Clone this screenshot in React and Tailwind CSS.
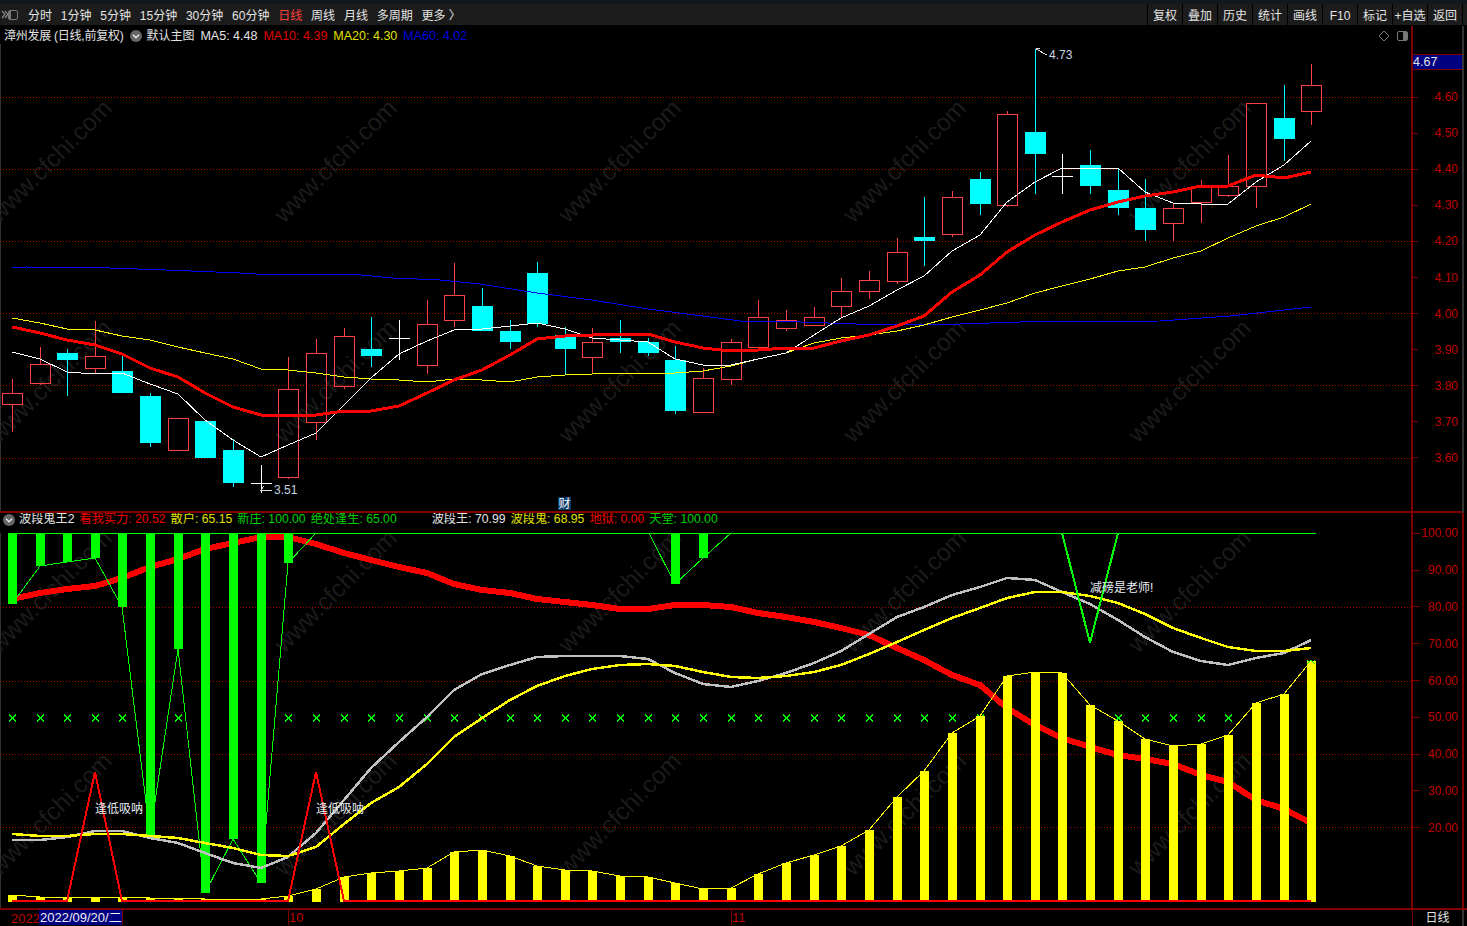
import React from "react";

const X = [12, 40, 67, 95, 122, 150, 178, 205, 233, 261, 288, 316, 344, 371, 399, 427, 454, 482, 510, 537, 565, 592, 620, 648, 675, 703, 731, 758, 786, 814, 841, 869, 897, 924, 952, 980, 1007, 1035, 1062, 1090, 1118, 1145, 1173, 1201, 1228, 1256, 1284, 1311];

// type, wick top, body top, body bottom, wick bottom
const candles = [
  ["r", 379, 393, 404, 432], ["r", 347, 364, 383, 385], ["c", 349, 353, 360, 396], ["r", 321, 356, 368, 374],
  ["c", 356, 371, 393, 393], ["c", 393, 396, 443, 447], ["r", 418, 418, 450, 450], ["c", 421, 421, 458, 458],
  ["c", 439, 450, 483, 487], ["w", 465, 483, 483, 493], ["r", 357, 389, 477, 479], ["r", 339, 353, 422, 440],
  ["r", 328, 336, 386, 389], ["c", 317, 349, 356, 367], ["w", 320, 338, 338, 360], ["r", 300, 324, 365, 374],
  ["r", 263, 295, 320, 327], ["c", 288, 306, 331, 331], ["c", 320, 331, 342, 349], ["c", 262, 273, 324, 327],
  ["c", 327, 335, 349, 374], ["r", 328, 342, 357, 374], ["c", 320, 338, 342, 353], ["c", 338, 342, 353, 356],
  ["c", 346, 360, 411, 414], ["r", 368, 378, 412, 412], ["r", 339, 342, 379, 385], ["r", 300, 317, 347, 350],
  ["r", 310, 320, 328, 331], ["r", 307, 317, 325, 325], ["r", 278, 291, 306, 317], ["r", 271, 280, 291, 299],
  ["r", 238, 252, 281, 284], ["c", 197, 237, 241, 266], ["r", 191, 197, 234, 237], ["c", 172, 179, 204, 215],
  ["r", 111, 114, 205, 207], ["c", 49, 132, 154, 194], ["w", 154, 176, 176, 194], ["c", 150, 165, 186, 194],
  ["c", 168, 190, 208, 215], ["c", 179, 208, 230, 241], ["r", 203, 208, 223, 241], ["r", 180, 186, 202, 223],
  ["r", 155, 186, 195, 197], ["r", 103, 103, 186, 208], ["c", 85, 118, 139, 161], ["r", 64, 85, 111, 125],
];

const ma5 = [352, 359, 372, 374, 373, 384, 394, 420, 440, 457, 445, 433, 405, 378, 354, 341, 330, 329, 326, 323, 329, 338, 340, 342, 359, 365, 365, 359, 353, 335, 318, 306, 290, 276, 251, 235, 202, 182, 168, 168, 168, 192, 203, 204, 204, 182, 165, 141];
const ma10 = [327, 333, 340, 345, 354, 368, 377, 393, 407, 415, 415, 415, 411, 411, 406, 393, 380, 370, 355, 339, 336, 335, 334, 334, 342, 348, 351, 350, 348, 348, 341, 335, 326, 316, 292, 275, 252, 235, 222, 210, 202, 196, 192, 186, 186, 175, 178, 172];
const ma20 = [318, 323, 329, 330, 336, 340, 347, 353, 359, 369, 370, 373, 377, 379, 380, 382, 379, 380, 382, 377, 375, 374, 373, 373, 373, 371, 366, 359, 353, 343, 338, 335, 331, 325, 317, 310, 303, 293, 286, 279, 271, 267, 258, 251, 238, 226, 217, 204];
const ma60 = "12,268 26,267 110,268 166,270 240,273 256,274 300,274 350,274 393,278 440,280 480,284 537,293 592,300 648,309 703,316 740,321 773,321 856,324 960,324 1020,322 1160,321 1230,316 1311,307";

const heavyRed = [599, 593, 589, 586, 578, 567, 559, 549, 543, 537, 537, 544, 553, 560, 567, 573, 584, 590, 593, 599, 602, 605, 609, 609, 605, 605, 607, 613, 617, 622, 628, 635, 648, 660, 675, 685, 708, 725, 738, 747, 755, 759, 764, 775, 782, 800, 809, 823];
const gray = [840, 840, 837, 831, 831, 838, 843, 853, 863, 868, 857, 833, 800, 768, 742, 717, 690, 674, 665, 657, 656, 656, 656, 659, 673, 684, 687, 681, 673, 663, 651, 634, 617, 607, 595, 587, 578, 580, 592, 604, 620, 637, 652, 661, 665, 658, 653, 640];
const yellow = [834, 836, 836, 834, 834, 836, 838, 843, 848, 855, 856, 847, 824, 803, 787, 764, 737, 718, 700, 686, 676, 669, 665, 664, 666, 672, 677, 678, 676, 672, 665, 654, 642, 630, 618, 608, 598, 592, 592, 596, 603, 614, 628, 638, 647, 651, 651, 648];
const volume = [895, 897, 897, 897, 897, 898, 898, 899, 899, 899, 896, 889, 877, 873, 871, 868, 852, 850, 856, 866, 870, 871, 876, 877, 883, 889, 888, 874, 863, 855, 846, 830, 797, 771, 733, 716, 676, 672, 673, 705, 721, 739, 746, 744, 735, 703, 694, 661];
const greenBars = [[0, 604], [1, 566], [2, 562], [3, 558], [4, 607], [5, 835], [6, 649], [7, 893], [8, 839], [9, 883], [10, 563], [24, 584], [25, 558]];
const crossIdx = [0, 1, 2, 3, 4, 6, 10, 11, 12, 13, 14, 15, 16, 17, 18, 19, 20, 21, 22, 23, 24, 25, 26, 27, 28, 29, 30, 31, 32, 33, 34, 35, 40, 41, 42, 43, 44];

const priceLabels = ["4.60", "4.50", "4.40", "4.30", "4.20", "4.10", "4.00", "3.90", "3.80", "3.70", "3.60"];
const lowerLabels = ["100.00", "90.00", "80.00", "70.00", "60.00", "50.00", "40.00", "30.00", "20.00"];
const leftMenu = ["分时", "1分钟", "5分钟", "15分钟", "30分钟", "60分钟", "日线", "周线", "月线", "多周期", "更多 〉"];
const rightMenu = ["复权", "叠加", "历史", "统计", "画线", "F10", "标记", "+自选", "返回"];

const pts = (ys) => ys.map((y, i) => `${X[i]},${y}`).join(" ");

function Watermark({ rows }) {
  const cols = [-1, 284, 568, 853, 1138, 1423];
  return rows.map((y) =>
    cols.map((x) => (
      <text
        key={`${x}-${y}`}
        x={x}
        y={y}
        transform={`rotate(-45 ${x} ${y})`}
        fontSize="24.5"
        fill="#1b1b1b"
        textRendering="geometricPrecision"
      >
        www.cfchi.com
      </text>
    ))
  );
}

function Dotted({ ys }) {
  return ys.map((y) => (
    <line
      key={y}
      x1="0"
      x2="1411"
      y1={y + 0.5}
      y2={y + 0.5}
      stroke="#a80000"
      strokeDasharray="1 2"
      shapeRendering="auto"
    />
  ));
}

function Candle({ c, x }) {
  const [t, top, a, b, bot] = c;
  if (t === "w") {
    return (
      <g stroke="#fff">
        <line x1={x + 0.5} x2={x + 0.5} y1={top} y2={bot} />
        <line x1={x - 10} x2={x + 11} y1={a + 0.5} y2={a + 0.5} />
      </g>
    );
  }
  if (t === "c") {
    return (
      <g>
        <line x1={x + 0.5} x2={x + 0.5} y1={top} y2={bot} stroke="#00ffff" />
        <rect x={x - 10} y={a} width="21" height={b - a} fill="#00ffff" />
      </g>
    );
  }
  return (
    <g stroke="#ff4040">
      <line x1={x + 0.5} x2={x + 0.5} y1={top} y2={a} />
      <line x1={x + 0.5} x2={x + 0.5} y1={b} y2={bot} />
      <rect x={x - 9.5} y={a + 0.5} width="20" height={b - a} fill="none" />
    </g>
  );
}

function ChevronDot() {
  return (
    <svg width="12" height="12" viewBox="0 0 12 12" className="shrink-0">
      <circle cx="6" cy="6" r="6" fill="#666" />
      <path d="M3 4.8 L6 7.8 L9 4.8" fill="none" stroke="#e8e8e8" strokeWidth="1.4" />
    </svg>
  );
}

function PriceChart() {
  return (
    <svg width="1411" height="467" viewBox="0 44 1411 467" shapeRendering="crispEdges" className="block">
      <rect x="0" y="44" width="1" height="467" fill="#333" />
      <g shapeRendering="auto">
        <Watermark rows={[224, 444]} />
      </g>
      <Dotted ys={[97, 169, 241, 313, 385, 458]} />
      {candles.map((c, i) => (
        <Candle key={i} c={c} x={X[i]} />
      ))}
      <polyline points={ma60} fill="none" stroke="#0000ff" />
      <polyline points={pts(ma20)} fill="none" stroke="#ffff00" />
      <polyline points={pts(ma5)} fill="none" stroke="#ffffff" />
      <polyline points={pts(ma10)} fill="none" stroke="#ff0000" strokeWidth="3" />
      <polyline points="1047,55 1036,49 1040,48" fill="none" stroke="#ddd" />
      <text x="1049" y="59" fontSize="12" fill="#c8d4e0" shapeRendering="auto">4.73</text>
      <polyline points="264,486 261,490 272,490" fill="none" stroke="#ddd" />
      <text x="274" y="494" fontSize="12" fill="#c8d4e0" shapeRendering="auto">3.51</text>
    </svg>
  );
}

function IndicatorChart() {
  return (
    <svg width="1411" height="375" viewBox="0 533 1411 375" shapeRendering="crispEdges" className="block">
      <rect x="0" y="533" width="1" height="375" fill="#333" />
      <g shapeRendering="auto">
        <Watermark rows={[654, 877]} />
      </g>
      <Dotted ys={[607, 681, 754, 827]} />
      <line x1="8" x2="1316" y1="533.5" y2="533.5" stroke="#00ff00" />
      {crossIdx.map((i) => (
        <path
          key={i}
          d={`M${X[i] - 3} 714.5 L${X[i] + 4} 721.5 M${X[i] + 4} 714.5 L${X[i] - 3} 721.5`}
          stroke="#00ff00"
          strokeWidth="2"
          fill="none"
        />
      ))}
      <polyline points={pts(heavyRed)} fill="none" stroke="#ff0000" strokeWidth="6" />
      {greenBars.map(([i, b]) => (
        <rect key={i} x={X[i] - 4} y="533" width="9" height={b - 533} fill="#00ff00" />
      ))}
      <polyline
        points={`${greenBars.slice(0, 11).map(([i, b]) => `${X[i]},${b}`).join(" ")} 316,533`}
        fill="none"
        stroke="#00ff00"
      />
      <polyline points="649,533 675,584 703,558 731,533" fill="none" stroke="#00ff00" />
      {volume.map((y, i) => (
        <rect key={i} x={X[i] - 4} y={y} width="9" height={902 - y} fill="#ffff00" />
      ))}
      <path d="M1307 664 L1311 660 L1315 664 M1307 660 L1308 661 M1315 660 L1314 661" stroke="#00ff00" fill="none" />
      <polyline points={pts(volume)} fill="none" stroke="#ffff00" />
      <polyline points={pts(gray)} fill="none" stroke="#c0c0c0" strokeWidth="2.5" />
      <polyline points={pts(yellow)} fill="none" stroke="#ffff00" strokeWidth="2.5" />
      <polyline points="1062,533 1090,643 1118,533" fill="none" stroke="#00ff00" strokeWidth="2" />
      <polyline
        points="12,901 67,901 95,772 122,901 288,901 316,772 344,901 1311,901"
        fill="none"
        stroke="#ff0000"
        strokeWidth="2"
      />
      <g fontSize="12" fill="#e8eef4" shapeRendering="auto">
        <text x="95" y="813">逢低吸呐</text>
        <text x="316" y="813">逢低吸呐</text>
        <text x="1090" y="592">减磅是老师!</text>
      </g>
    </svg>
  );
}

export default function App() {
  return (
    <div className="w-[1467px] h-[926px] bg-black overflow-hidden flex flex-col text-[12px] leading-none text-[#e4e4e4] font-['Liberation_Sans','Noto_Sans_CJK_SC',sans-serif]">
      {/* toolbar */}
      <div className="h-[26px] shrink-0 flex items-center bg-[#1c1c1c] border-t-[4px] border-t-[#12181c] border-b border-b-black">
        <svg width="18" height="12" viewBox="0 0 18 12" className="ml-[1px] shrink-0">
          <path d="M1 2 L4 5.5 L1 9 M4 2 L7 5.5 L4 9" fill="none" stroke="#888" strokeWidth="1.2" />
          <rect x="7.5" y="1.5" width="9" height="9" rx="1.5" fill="none" stroke="#777" />
          <rect x="8" y="2" width="2" height="8" fill="#777" />
        </svg>
        <div className="ml-[9px] flex gap-[8.8px] pt-[2px]">
          {leftMenu.map((m) => (
            <span key={m} className={m === "日线" ? "text-[#ff3c3c]" : ""}>
              {m}
            </span>
          ))}
        </div>
        <div className="ml-auto mr-[4px] flex h-full border-l border-l-black">
          {rightMenu.map((m) => (
            <span key={m} className="w-[35px] flex items-center justify-center pt-[2px] border-r border-r-black">
              {m}
            </span>
          ))}
        </div>
      </div>

      {/* price pane */}
      <div className="h-[487px] shrink-0 flex">
        <div className="w-[1411px] shrink-0 relative border-b-2 border-b-[#800000]">
          <div className="h-[18px] flex items-center pl-[4px] pt-[2px]">
            <span className="tracking-[-0.25px]">漳州发展 (日线,前复权)</span>
            <span className="ml-[7px]">
              <ChevronDot />
            </span>
            <span className="ml-[4px]">默认主图</span>
            <span className="ml-[6px] text-[12.5px]">MA5: 4.48</span>
            <span className="ml-[6px] text-[12.5px] text-[#e00000]">MA10: 4.39</span>
            <span className="ml-[6px] text-[12.5px] text-[#e0e000]">MA20: 4.30</span>
            <span className="ml-[6px] text-[12.5px] text-[#0000e0]">MA60: 4.02</span>
            <svg width="32" height="12" viewBox="0 0 32 12" className="ml-auto mr-[1px]">
              <path d="M6 1 L11 6 L6 11 L1 6 Z" fill="none" stroke="#777" />
              <rect x="19.5" y="1.5" width="10" height="9" rx="1.5" fill="none" stroke="#777" />
              <rect x="25" y="2" width="4" height="8" fill="#777" />
            </svg>
          </div>
          <PriceChart />
          <span className="absolute left-[558px] top-[471px] w-[13px] h-[13px] flex items-center justify-center bg-[#0a3a6a] text-white">
            财
          </span>
        </div>
        <div className="w-[51px] shrink-0 border-l-2 border-l-[#800000] border-b-2 border-b-[#800000] pt-[28px]">
          <div className="h-[16px] flex items-center bg-[#000080] border-y border-y-[#800000] text-[12.5px]">4.67</div>
          <div className="mt-[9px] flex flex-col">
            {priceLabels.map((p) => (
              <div key={p} className="h-[36.1px] flex items-center justify-between pr-[4px]">
                <span className="w-[5px] h-px bg-[#800000]"></span>
                <span className="text-[#c00000]">{p}</span>
              </div>
            ))}
          </div>
        </div>
        <div className="flex-1 border-l-2 border-l-[#333]"></div>
      </div>

      {/* indicator pane */}
      <div className="h-[395px] shrink-0 flex">
        <div className="w-[1411px] shrink-0">
          <div className="h-[20px] flex items-center pl-[3px] pb-[7px] gap-[5px] text-[12.2px]">
            <ChevronDot />
            <span className="-ml-[1px]">波段鬼王2</span>
            <span className="text-[#f00000]">看我实力: 20.52</span>
            <span className="text-[#e0e000]">散户: 65.15</span>
            <span className="text-[#00d000]">新庄: 100.00</span>
            <span className="text-[#00d000]">绝处逢生: 65.00</span>
            <span className="ml-[30px]">波段王: 70.99</span>
            <span className="text-[#e0e000]">波段鬼: 68.95</span>
            <span className="text-[#f00000]">地狱: 0.00</span>
            <span className="text-[#00d000]">天堂: 100.00</span>
          </div>
          <IndicatorChart />
        </div>
        <div className="w-[51px] shrink-0 border-l-2 border-l-[#800000] pt-[2px]">
          {lowerLabels.map((p) => (
            <div key={p} className="h-[36.8px] flex items-center justify-between pr-[4px]">
              <span className="w-[7px] h-px bg-[#800000]"></span>
              <span className="text-[#c00000]">{p}</span>
            </div>
          ))}
        </div>
        <div className="flex-1 border-l-2 border-l-[#800000]"></div>
      </div>

      {/* time axis */}
      <div className="h-[18px] shrink-0 flex border-t-2 border-t-[#800000]">
        <div className="w-[1412px] shrink-0 relative text-[#c00000] text-[13px]">
          <span className="absolute left-[11px] top-[2px]">2022</span>
          <span className="absolute left-[39px] top-0 w-[84px] h-[15px] flex items-center pl-[1px] bg-[#000080] text-[#eee] border-r border-r-[#800000]">
            2022/09/20/二
          </span>
          <span className="absolute left-[288px] top-0 h-[15px] border-l border-l-[#800000] pt-[1px]">10</span>
          <span className="absolute left-[731px] top-0 h-[15px] border-l border-l-[#800000] pt-[1px]">11</span>
        </div>
        <div className="w-[50px] shrink-0 flex items-center justify-center border-l border-l-[#800000]">日线</div>
        <div className="flex-1 border-l-2 border-l-[#333]"></div>
      </div>
    </div>
  );
}
